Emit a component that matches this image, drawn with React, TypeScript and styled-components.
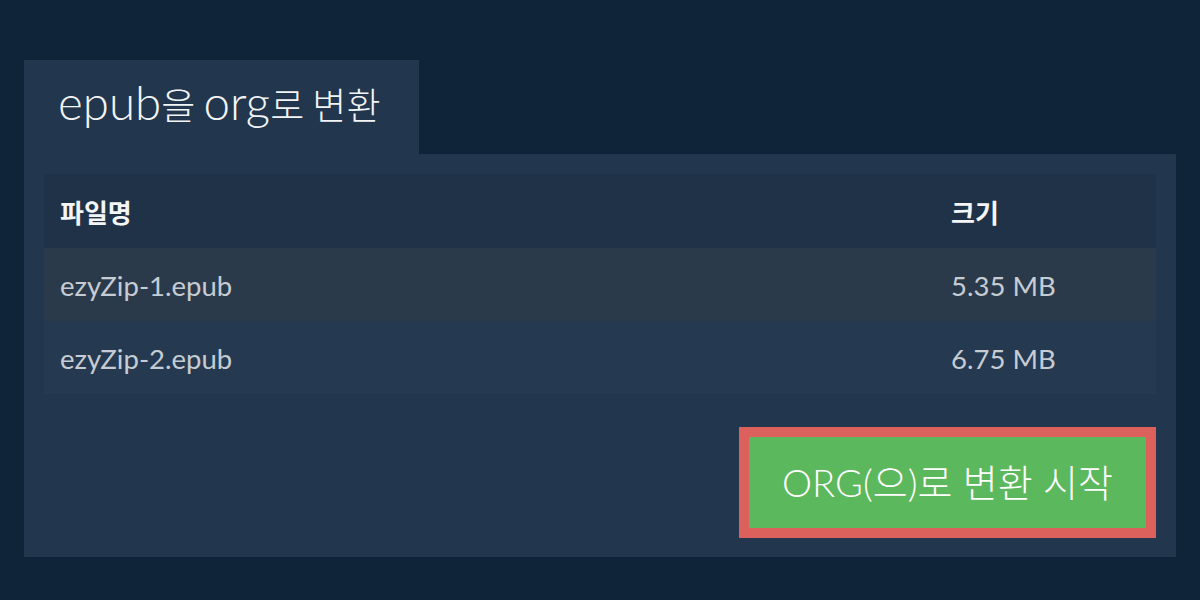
import styled, { createGlobalStyle } from "styled-components"

const GlobalStyle = createGlobalStyle`
  html, body {
    margin: 0;
    padding: 0;
    background: #0f2339;
  }
  * {
    box-sizing: border-box;
  }
`

const files = [
	{ name: "ezyZip-1.epub", size: "5.35 MB" },
	{ name: "ezyZip-2.epub", size: "6.75 MB" },
]

export default function App() {
	return (
		<>
			<GlobalStyle />
			<Page>
				<Tab>
					<Latin>epub</Latin>을 <Latin>org</Latin>로 변환
				</Tab>
				<Panel>
					<Table>
						<thead>
							<HeadRow>
								<HeadCell>파일명</HeadCell>
								<HeadCell $narrow>크기</HeadCell>
							</HeadRow>
						</thead>
						<tbody>
							{files.map((f, i) => (
								<Row key={f.name} $odd={i % 2 === 0}>
									<Cell>{f.name}</Cell>
									<Cell $narrow>{f.size}</Cell>
								</Row>
							))}
						</tbody>
					</Table>
					<Actions>
						<ConvertButton>ORG(으)로 변환 시작</ConvertButton>
					</Actions>
				</Panel>
			</Page>
		</>
	)
}

const Page = styled.div`
  width: 1200px;
  height: 600px;
  padding: 60px 24px 0;
  display: flex;
  flex-direction: column;
  align-items: flex-start;
`

const Tab = styled.div`
  width: 395px;
  height: 94px;
  padding: 0 0 10px 34px;
  display: flex;
  align-items: baseline;
  align-content: center;
  flex-wrap: wrap;
  white-space: pre;
  background: #22364d;
  color: #f2f4f6;
  font-family: "Noto Sans CJK KR", sans-serif;
  font-weight: 300;
  font-size: 37px;
`

const Latin = styled.span`
  font-family: Lato, sans-serif;
  font-weight: 300;
  font-size: 47.5px;
`

const Panel = styled.div`
  width: 1152px;
  height: 403px;
  padding: 20px;
  background: #22364d;
  display: flex;
  flex-direction: column;
`

const Table = styled.table`
  width: 100%;
  border-collapse: collapse;
  font-family: Lato, "Noto Sans CJK KR", sans-serif;
`

const HeadRow = styled.tr`
  height: 74px;
  background: #1f3247;
`

const HeadCell = styled.th<{ $narrow?: boolean }>`
  padding: 0 16px;
  text-align: left;
  font-family: "Noto Sans CJK KR", sans-serif;
  font-weight: 700;
  font-size: 26px;
  color: #f4f5f7;
  width: ${(p) => (p.$narrow ? "221px" : "auto")};
`

const Row = styled.tr<{ $odd?: boolean }>`
  height: 73px;
  background: ${(p) => (p.$odd ? "#2b3a4b" : "#253a50")};
`

const Cell = styled.td<{ $narrow?: boolean }>`
  padding: 2px 16px 0;
  font-size: 27.5px;
  color: #c6ccd3;
  width: ${(p) => (p.$narrow ? "221px" : "auto")};
`

const Actions = styled.div`
  display: flex;
  justify-content: flex-end;
  margin-top: 33px;
`

const ConvertButton = styled.button`
  width: 417px;
  height: 111px;
  border: 10px solid #dc605c;
  background: #5cb85c;
  color: #ffffff;
  font-family: Lato, "Noto Sans CJK KR", sans-serif;
  font-weight: 300;
  font-size: 38px;
  padding: 0 0 4px;
  cursor: pointer;
`
